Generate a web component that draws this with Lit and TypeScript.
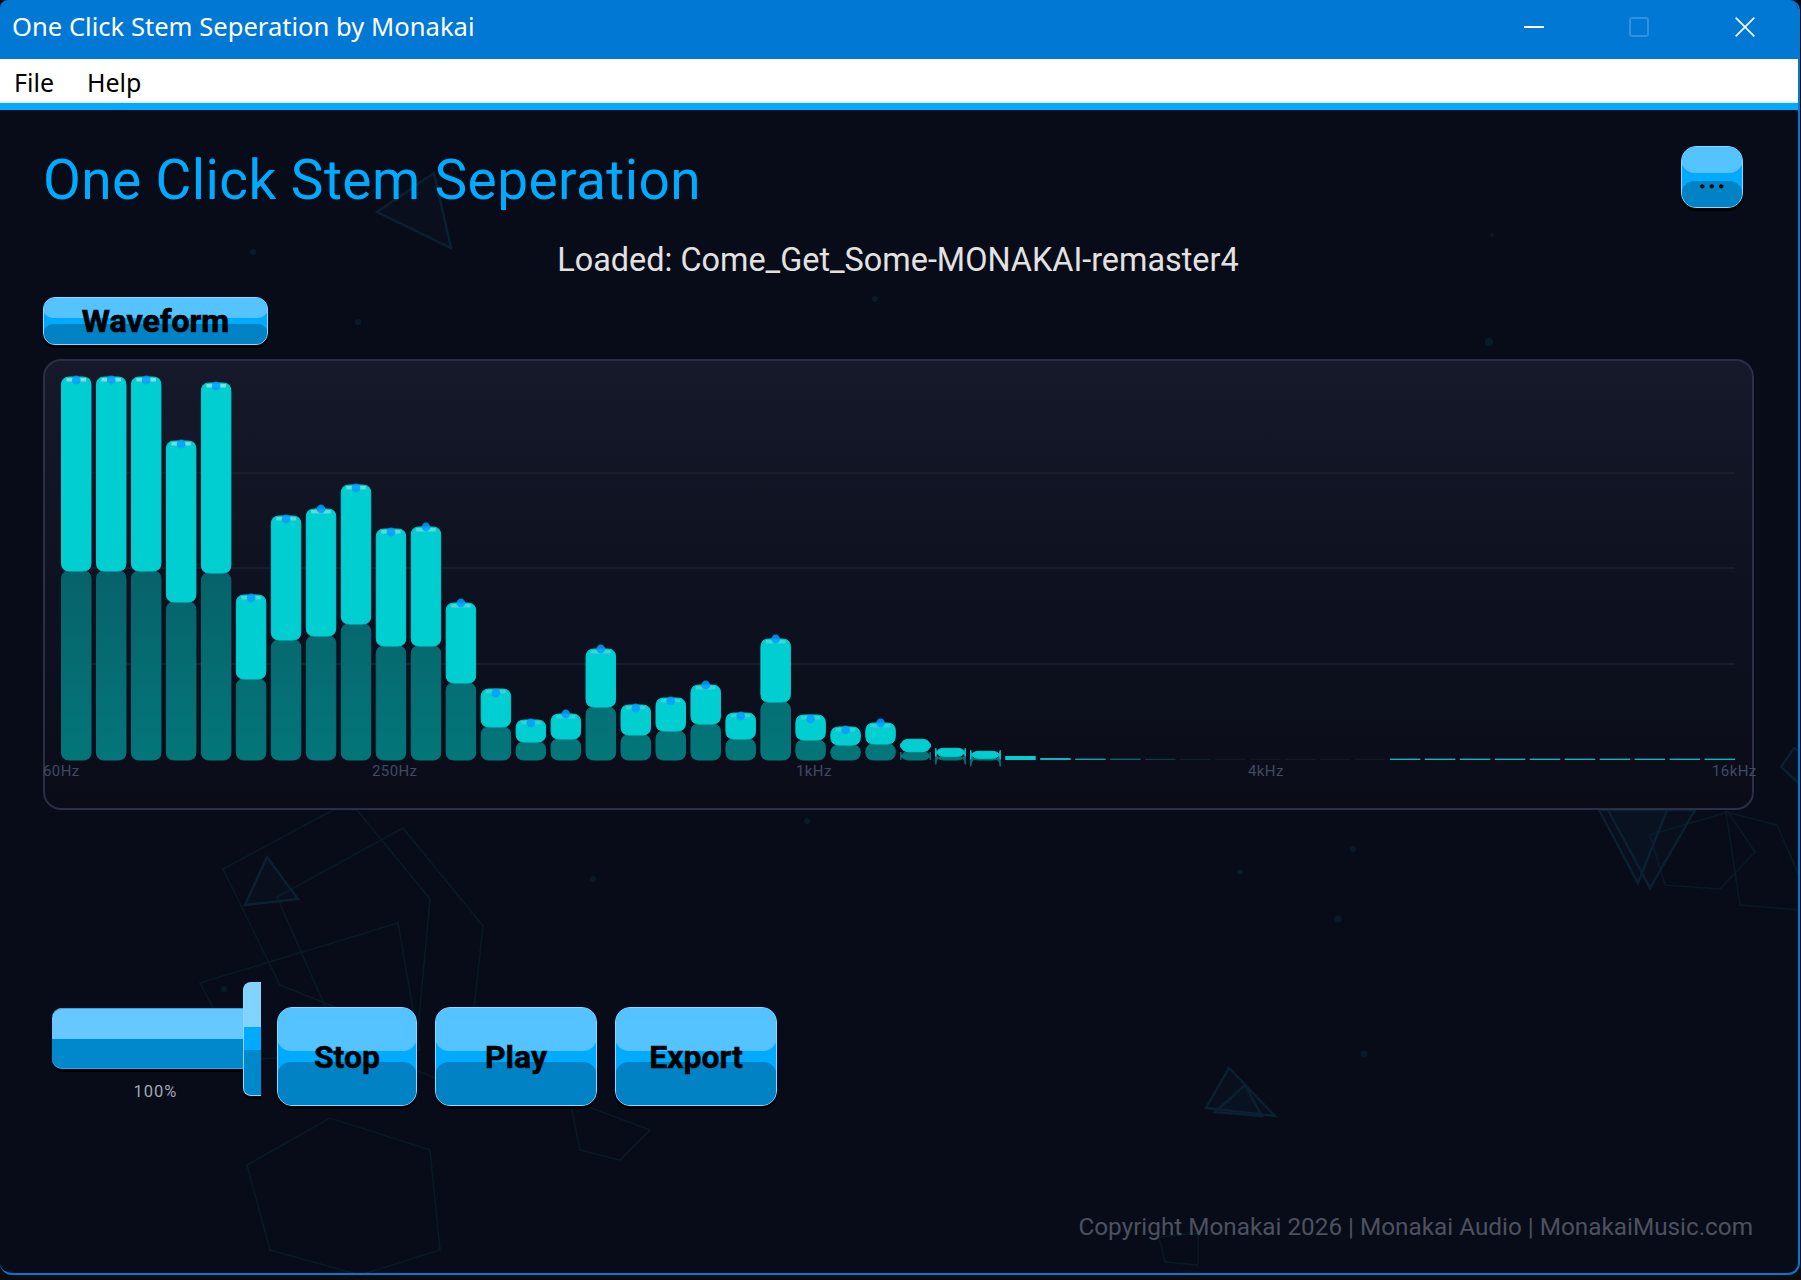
import { LitElement, html, svg, css } from "lit";
import { customElement } from "lit/decorators.js";

// [top of bright bar, top of dark bar, peak dot y], page pixels
const BARS: [number, number, number?][] = [
  [377, 571, 380], [377, 571, 380], [377, 571, 380], [441, 602, 444], [383, 573, 386],
  [595, 679, 598], [516, 640, 519], [509, 636, 509], [485, 624, 488], [529, 646, 532],
  [527, 646, 527], [603, 683, 603], [689, 727, 693], [720, 742, 723], [714, 739, 714],
  [649, 707, 649], [705, 735, 708], [698, 731, 701], [685, 724, 685], [713, 739, 716],
  [639, 702, 639], [715, 740, 719], [727, 745, 730], [723, 744, 723],
  [739.3, 751.7], [748.3, 756.3], [751.3, 758.3],
];
// flat bars after the rounded ones: [height, colour]
const TAIL: [number, string][] = [
  [4, "#00ced1"], [2, "#00bcc0"], [1.4, "#0aa5aa"], [1.4, "#0b6469"], [1.2, "#0e3b42"],
  [1.2, "#0f2229"], [1.2, "#111a23"], [1.2, "#111922"], [1.2, "#111922"], [1.2, "#111922"], [1.2, "#111922"],
  ...Array.from({ length: 10 }, () => [1.4, "#14b4bc"] as [number, string]),
];
const FLOOR = 760;
const PITCH = 34.97;
const BAR_W = 30.5;
const RADIUS = 8;
const GRID = [473, 568, 664];
const LABELS: [string, number][] = [["60Hz", 43], ["250Hz", 372], ["1kHz", 796], ["4kHz", 1248], ["16kHz", 1712]];

// same corner maths as a canvas path, so very short bars fold over themselves
const barPath = (x: number, y: number, w: number, h: number) => {
  const r = RADIUS;
  return `M${x + r} ${y}L${x + w - r} ${y}Q${x + w} ${y} ${x + w} ${y + r}L${x + w} ${y + h - r}Q${x + w} ${y + h} ${x + w - r} ${y + h}L${x + r} ${y + h}Q${x} ${y + h} ${x} ${y + h - r}L${x} ${y + r}Q${x} ${y} ${x + r} ${y}Z`;
};

const BACKDROP = [
  "223,869 333,810 357,810 430,899 417,1040 280,985",
  "403,828 483,926 465,1090 340,1040 277,897",
  "398,923 200,983 240,1060 420,1050",
  "247,1165 330,1118 430,1150 440,1250 360,1275 270,1250",
  "570,1100 650,1130 620,1160 580,1150",
  "1728,812 1755,852 1720,889 1665,885 1650,835",
  "1726,812 1777,825 1801,880 1801,910 1740,905",
  "1159,1237 1198,1233 1198,1265 1165,1262",
];
const BACKDROP_STRONG = [
  "377,212 434,173 451,248",
  "267,857 298,899 245,905",
  "1599,810 1638,883 1667,810",
  "1608,810 1650,888 1695,810",
  "1781,767 1794,748 1801,752 1801,785",
  "1229,1068 1275,1116 1206,1108",
  "1245,1085 1262,1116 1215,1112",
];
const SPECKS: [number, number, number][] = [
  [875, 299, 3], [1489, 342, 4], [807, 821, 3], [1338, 919, 3.5], [1364, 1054, 3.5], [1492, 235, 2],
  [593, 879, 3], [253, 252, 3], [358, 322, 3], [224, 989, 3], [1353, 849, 3], [1240, 872, 2.5],
];

@customElement("app-root")
export class AppRoot extends LitElement {
  static styles = css`
    :host {
      display: block;
      width: 1801px;
      height: 1280px;
      background: #0c0c10;
      font-family: Roboto, sans-serif;
    }
    .window {
      position: relative;
      width: 1800px;
      height: 1275px;
      box-sizing: border-box;
      display: flex;
      flex-direction: column;
      border-right: 2px solid #0078d4;
      border-bottom: 2px solid #0078d4;
      border-radius: 8px 10px 12px 12px;
      overflow: hidden;
      background: #080c18;
    }
    .titlebar {
      height: 59px;
      flex: none;
      margin-right: -2px;
      display: flex;
      align-items: center;
      background: #0078d4;
      color: #fff;
      font-family: "Noto Sans", sans-serif;
      font-size: 25.6px;
      padding-left: 12px;
    }
    .titlebar .name {
      flex: 1;
      margin-bottom: 7px;
    }
    .winbtn {
      display: block;
      margin-bottom: 6px;
    }
    .winbtn.min {
      margin-right: 85px;
    }
    .winbtn.max {
      margin-right: 86px;
    }
    .winbtn.close {
      margin-right: 45px;
    }
    .menubar {
      height: 42px;
      flex: none;
      box-sizing: content-box;
      display: flex;
      align-items: center;
      gap: 33px;
      padding-left: 14px;
      background: #fff;
      border-bottom: 2px solid #ececec;
      color: #000;
      font-family: "Noto Sans", sans-serif;
      font-size: 25px;
    }
    .menubar span {
      margin-top: 4px;
    }
    .accent {
      height: 7px;
      flex: none;
      background: #00aaff;
    }
    main {
      position: relative;
      flex: 1;
      min-height: 0;
      display: flex;
      flex-direction: column;
      padding: 36px 45px 31px 43px;
    }
    .backdrop {
      position: absolute;
      left: 0;
      top: -110px;
      pointer-events: none;
    }
    .backdrop polygon {
      fill: none;
      stroke: #0a1926;
      stroke-width: 1.6;
    }
    .backdrop polygon.strong {
      fill: rgba(14, 40, 66, 0.12);
      stroke: #0b2031;
      stroke-width: 2.4;
    }
    .backdrop circle {
      fill: #0b1a2b;
    }
    .head {
      position: relative;
      display: flex;
      justify-content: space-between;
      align-items: flex-start;
      padding-right: 10px;
    }
    h1 {
      margin: 6px 0 0;
      font-weight: 400;
      font-size: 55px;
      line-height: 56px;
      color: #00aaff;
      letter-spacing: 0.4px;
    }
    .loaded {
      position: relative;
      margin-top: 33px;
      text-align: center;
      font-size: 32.4px;
      line-height: 38px;
      color: #e2e2e2;
    }
    .glossy {
      position: relative;
      display: flex;
      align-items: center;
      justify-content: center;
      box-sizing: border-box;
      padding: 0;
      border: 1.5px solid #8fd6ff;
      color: #000;
      font-family: Roboto, sans-serif;
      font-weight: 700;
      background: #00aaff;
      box-shadow: 0 3px 0 #000;
      overflow: hidden;
    }
    .glossy::before,
    .glossy::after {
      content: "";
      position: absolute;
      left: -1px;
      right: -1px;
    }
    .glossy::before {
      top: -1px;
      height: 45%;
      background: #55c3ff;
      border-radius: 0 0 14px 14px;
    }
    .glossy::after {
      bottom: -1px;
      height: 45%;
      background: #0082c4;
      border-radius: 14px 14px 0 0;
    }
    .glossy span {
      position: relative;
      z-index: 1;
      -webkit-text-stroke: 0.5px #000;
    }
    .more {
      width: 62px;
      height: 62px;
      border-radius: 15px;
      font-size: 22px;
    }
    .more span {
      letter-spacing: 3.2px;
      margin-right: -3px;
      line-height: 1;
      transform: translateY(4px);
      -webkit-text-stroke: 0.8px #000;
    }
    .tab {
      margin-top: 18px;
      width: 225px;
      height: 48px;
      border-radius: 12px;
      font-size: 32.2px;
    }
    .tab span {
      -webkit-text-stroke: 0.7px #000;
    }
    .tab::before {
      border-radius: 0 0 10px 10px;
    }
    .tab::after {
      border-radius: 10px 10px 0 0;
    }
    .panel {
      position: relative;
      margin-top: 14px;
      width: 1711px;
      height: 451px;
      box-sizing: border-box;
      flex: none;
      border: 2px solid #2a2f45;
      border-radius: 18px;
      background: linear-gradient(#151929 0%, #0e1120 50%, #0a0d18 100%);
    }
    .panel svg {
      display: block;
      overflow: visible;
    }
    .grid {
      stroke: #20222e;
      stroke-width: 1.4;
    }
    .axis {
      fill: #414963;
      font: 15px Roboto, sans-serif;
      letter-spacing: 0.4px;
    }
    .controls {
      position: relative;
      margin-top: 172px;
      display: flex;
      align-items: flex-start;
    }
    .volume {
      margin-left: 9px;
      width: 209px;
      padding-top: 26px;
      display: flex;
      flex-direction: column;
    }
    .track {
      position: relative;
      width: 191px;
      height: 61px;
      border-radius: 10px 0 0 10px;
      background: linear-gradient(#66c8ff 0 50%, #0088cc 50% 100%);
      box-shadow: 0 3px 0 #000, 0 -1px 0 #3aa0dc inset, 0 1px 0 #3aa0dc inset;
    }
    .thumb {
      position: absolute;
      left: 191px;
      top: -26px;
      width: 18px;
      height: 114px;
      box-sizing: border-box;
      border: 1.5px solid #8fd6ff;
      border-right: none;
      border-radius: 8px 0 0 8px;
      background: linear-gradient(#80d4ff 0 39%, #00aaff 39% 60%, #0088cc 60% 100%);
      box-shadow: 0 3px 0 #000;
    }
    .pct {
      margin-top: 13px;
      width: 191px;
      padding-left: 16px;
      box-sizing: border-box;
      text-align: center;
      font-size: 16.5px;
      line-height: 20px;
      letter-spacing: 1px;
      color: #a3a6b2;
    }
    .actions {
      margin: 25px 0 0 16px;
      display: flex;
      gap: 18px;
    }
    .action {
      height: 99px;
      width: 162px;
      border-radius: 15px;
      font-size: 32px;
    }
    .action.stop {
      width: 140px;
    }
    .copyright {
      position: relative;
      margin-top: auto;
      text-align: right;
      font-size: 24.3px;
      line-height: 30px;
      color: #4d515f;
    }
  `;

  renderBars() {
    const rounded = BARS.map(([top, split, peak], i) => {
      // the 1px stroke makes the bar BAR_W wide overall
      const x = 61.5 + i * PITCH;
      const w = BAR_W - 1;
      const h = split - top;
      return svg`
        <path d=${barPath(x, split, w, FLOOR - split)} fill="url(#lower)" stroke="url(#lower)" />
        <path d=${barPath(x, top, w, h)} fill="#00ced1" stroke="#00ced1" />
        ${peak === undefined
          ? null
          : svg`
            <rect x=${x + 5} y=${top + 1} width=${w - 10} height="3.5" fill="#fff" fill-opacity=${0.12 + (h / 193) * 0.33} />
            <circle cx=${x + w / 2} cy=${peak} r="4.4" fill="#009cff" fill-opacity="0.85" />`}
      `;
    });
    const flat = TAIL.map(([h, colour], i) => {
      const x = 61 + (i + BARS.length) * PITCH;
      return svg`<rect x=${x} y=${FLOOR - h} width=${BAR_W} height=${h} fill=${colour} />`;
    });
    return [rounded, flat];
  }

  render() {
    return html`
      <div class="window">
        <div class="titlebar">
          <span class="name">One Click Stem Seperation by Monakai</span>
          <svg class="winbtn min" width="20" height="20" viewBox="0 0 20 20"><rect y="9" width="20" height="2" fill="#fff" /></svg>
          <svg class="winbtn max" width="20" height="20" viewBox="0 0 20 20"><rect x="1" y="1" width="18" height="18" rx="2" fill="none" stroke="#2d92df" stroke-width="2" /></svg>
          <svg class="winbtn close" width="20" height="20" viewBox="0 0 20 20"><path d="M0.7 0.7L19.3 19.3M19.3 0.7L0.7 19.3" stroke="#f2f7fb" stroke-width="1.8" /></svg>
        </div>
        <div class="menubar"><span>File</span><span>Help</span></div>
        <div class="accent"></div>
        <main>
          <svg class="backdrop" width="1800" height="1275" viewBox="0 0 1800 1275">
            ${BACKDROP.map((p) => svg`<polygon points=${p} />`)}
            ${BACKDROP_STRONG.map((p) => svg`<polygon class="strong" points=${p} />`)}
            ${SPECKS.map(([x, y, r]) => svg`<circle cx=${x} cy=${y} r=${r} />`)}
          </svg>
          <div class="head">
            <h1>One Click Stem Seperation</h1>
            <button class="glossy more"><span>...</span></button>
          </div>
          <div class="loaded">Loaded: Come_Get_Some-MONAKAI-remaster4</div>
          <button class="glossy tab"><span>Waveform</span></button>
          <div class="panel">
            <!-- viewBox keeps page coordinates, the panel sits at 45,361 -->
            <svg width="1707" height="447" viewBox="45 361 1707 447">
              <defs>
                <linearGradient id="lower" gradientUnits="userSpaceOnUse" x1="0" y1="570" x2="0" y2="760">
                  <stop offset="0" stop-color="#07626a" />
                  <stop offset="1" stop-color="#03767a" />
                </linearGradient>
              </defs>
              ${GRID.map((y) => svg`<line class="grid" x1="61" x2="1735" y1=${y} y2=${y} />`)}
              ${this.renderBars()}
              ${LABELS.map(([t, x]) => svg`<text class="axis" x=${x} y="776">${t}</text>`)}
            </svg>
          </div>
          <div class="controls">
            <div class="volume">
              <div class="track"><div class="thumb"></div></div>
              <div class="pct">100%</div>
            </div>
            <div class="actions">
              <button class="glossy action stop"><span>Stop</span></button>
              <button class="glossy action"><span>Play</span></button>
              <button class="glossy action"><span>Export</span></button>
            </div>
          </div>
          <div class="copyright">Copyright Monakai 2026 | Monakai Audio | MonakaiMusic.com</div>
        </main>
      </div>
    `;
  }
}
